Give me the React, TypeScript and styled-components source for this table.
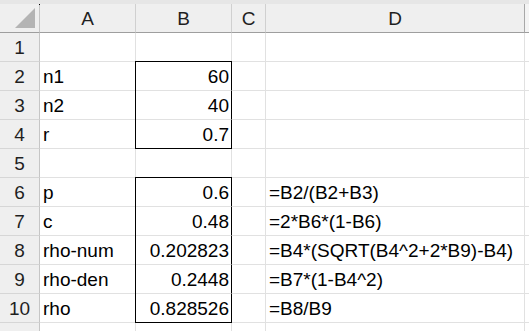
import React from "react";
import styled, { createGlobalStyle, css } from "styled-components";

const GlobalStyle = createGlobalStyle`
  *, *::before, *::after { box-sizing: border-box; }
  html, body { margin: 0; padding: 0; overflow: hidden; background: #ffffff; }
  body { font-family: "Liberation Sans", Arial, sans-serif; }
`;

type Col = { key: string; width: number };

const COLUMNS: Col[] = [
  { key: "A", width: 96 },
  { key: "B", width: 96 },
  { key: "C", width: 34 },
  { key: "D", width: 259 },
];

type Row = { n: number; a?: string; b?: string; d?: string };

const ROWS: Row[] = [
  { n: 1 },
  { n: 2, a: "n1", b: "60" },
  { n: 3, a: "n2", b: "40" },
  { n: 4, a: "r", b: "0.7" },
  { n: 5 },
  { n: 6, a: "p", b: "0.6", d: "=B2/(B2+B3)" },
  { n: 7, a: "c", b: "0.48", d: "=2*B6*(1-B6)" },
  { n: 8, a: "rho-num", b: "0.202823", d: "=B4*(SQRT(B4^2+2*B9)-B4)" },
  { n: 9, a: "rho-den", b: "0.2448", d: "=B7*(1-B4^2)" },
  { n: 10, a: "rho", b: "0.828526", d: "=B8/B9" },
];

// Outlined ranges in column B (first row, last row)
const FRAMES: [number, number][] = [
  [2, 4],
  [6, 10],
];

type Frame = { top: boolean; bottom: boolean; left: boolean; right: boolean };
const NO_FRAME: Frame = { top: false, bottom: false, left: false, right: false };

const frameFor = (row: number): Frame => {
  const range = FRAMES.find(([s, e]) => row >= s && row <= e);
  if (!range) return NO_FRAME;
  return { top: row === range[0], bottom: row === range[1], left: true, right: true };
};

const ROW_H = 29;
const GRID = "#e1e1e1";
const HEAD_BG = "#efefef";

const Viewport = styled.div`
  width: 529px;
  height: 331px;
  overflow: hidden;
`;

const Sheet = styled.div`
  display: grid;
  grid-template-columns: 40px ${COLUMNS.map((c) => `${c.width}px`).join(" ")} 1fr;
  grid-template-rows: 4px repeat(${ROWS.length + 2}, ${ROW_H}px);
  width: 529px;
  font-size: 19px;
  color: #000;
`;

const TopStrip = styled.div`
  grid-column: 1 / -1;
  background: #e6e6e6;
`;

const Corner = styled.div`
  position: relative;
  display: flex;
  justify-content: flex-end;
  align-items: flex-end;
  padding: 0 4px 4px 0;
  background: ${HEAD_BG};
  border-right: 1px solid #c6c6c6;
  border-bottom: 1px solid #9e9e9e;

  &::before {
    content: "";
    position: absolute;
    top: 0;
    right: -1px;
    width: 1px;
    height: 1px;
    background: #000;
  }
`;

const SelectAll = styled.div`
  width: 0;
  height: 0;
  border-left: 20px solid transparent;
  border-bottom: 20px solid #b4b4b4;
`;

const ColHead = styled.div<{ $last?: boolean }>`
  display: flex;
  justify-content: center;
  align-items: flex-end;
  padding-bottom: 2px;
  line-height: 22px;
  background: ${HEAD_BG};
  color: #1f1f1f;
  border-right: 1px solid ${(p) => (p.$last ? "#a8a8a8" : "#d0d0d0")};
  border-bottom: 1px solid #9e9e9e;
`;

const HeadFiller = styled.div`
  background: #f4f4f4;
  border-bottom: 1px solid #9e9e9e;
`;

const RowHead = styled.div`
  display: flex;
  justify-content: center;
  align-items: flex-end;
  padding-bottom: 2px;
  line-height: 22px;
  background: ${HEAD_BG};
  color: #1f1f1f;
  border-right: 1px solid #c6c6c6;
  border-bottom: 1px solid #d6d6d6;
`;

const Cell = styled.div<{ $align: "left" | "right"; $frame: Frame }>`
  display: flex;
  align-items: flex-end;
  justify-content: ${(p) => (p.$align === "right" ? "flex-end" : "flex-start")};
  padding: 0 2px 2px 3px;
  line-height: 22px;
  white-space: nowrap;
  background: #fff;
  border-right: 1px solid ${(p) => (p.$frame.right ? "#000" : GRID)};
  border-bottom: 1px solid ${(p) => (p.$frame.bottom ? "#000" : GRID)};
  ${(p) => {
    const shadows: string[] = [];
    if (p.$frame.left) shadows.push("-1px 0 0 #000");
    if (p.$frame.top) shadows.push("0 -1px 0 #000");
    if (p.$frame.left && p.$frame.top) shadows.push("-1px -1px 0 #000");
    return shadows.length
      ? css`
          box-shadow: ${shadows.join(", ")};
        `
      : "";
  }}
`;

const Filler = styled.div`
  background: #fff;
  border-bottom: 1px solid ${GRID};
`;

function SheetRow({ r, label = true }: { r: Row; label?: boolean }) {
  return (
    <>
      <RowHead>{label ? r.n : null}</RowHead>
      <Cell $align="left" $frame={NO_FRAME}>
        {r.a}
      </Cell>
      <Cell $align="right" $frame={frameFor(r.n)}>
        {r.b}
      </Cell>
      <Cell $align="left" $frame={NO_FRAME} />
      <Cell $align="left" $frame={NO_FRAME}>
        {r.d}
      </Cell>
      <Filler />
    </>
  );
}

export default function App() {
  return (
    <>
      <GlobalStyle />
      <Viewport>
        <Sheet>
          <TopStrip />
          <Corner>
            <SelectAll />
          </Corner>
          {COLUMNS.map((c, i) => (
            <ColHead key={c.key} $last={i === COLUMNS.length - 1}>
              {c.key}
            </ColHead>
          ))}
          <HeadFiller />
          {ROWS.map((r) => (
            <SheetRow key={r.n} r={r} />
          ))}
          {/* next row sits below the fold; only its top gridlines show */}
          <SheetRow r={{ n: ROWS.length + 1 }} label={false} />
        </Sheet>
      </Viewport>
    </>
  );
}
